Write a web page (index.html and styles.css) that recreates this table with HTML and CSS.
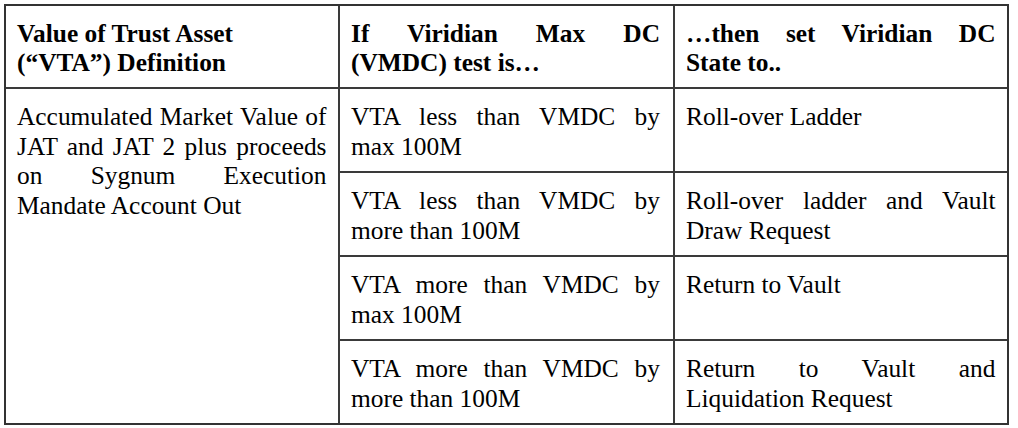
FILE: index.html
```html
<!DOCTYPE html>
<html>
<head>
<meta charset="utf-8">
<link rel="stylesheet" href="styles.css">
</head>
<body>
<div class="vt">
  <div class="cell head c1"><span class="ln">Value of Trust Asset</span><span class="ln">(“VTA”) Definition</span></div>
  <div class="cell head c2"><span class="ln j">If Viridian Max DC</span><span class="ln">(VMDC) test is…</span></div>
  <div class="cell head c3"><span class="ln j">…then set Viridian DC</span><span class="ln">State to..</span></div>

  <div class="cell body c1 span"><span class="ln j">Accumulated Market Value of</span><span class="ln j">JAT and JAT 2 plus proceeds</span><span class="ln j">on Sygnum Execution</span><span class="ln">Mandate Account Out</span></div>

  <div class="cell body c2"><span class="ln j">VTA less than VMDC by</span><span class="ln">max 100M</span></div>
  <div class="cell body c3"><span class="ln">Roll-over Ladder</span></div>

  <div class="cell body c2"><span class="ln j">VTA less than VMDC by</span><span class="ln">more than 100M</span></div>
  <div class="cell body c3"><span class="ln j">Roll-over ladder and Vault</span><span class="ln">Draw Request</span></div>

  <div class="cell body c2"><span class="ln j">VTA more than VMDC by</span><span class="ln">max 100M</span></div>
  <div class="cell body c3"><span class="ln">Return to Vault</span></div>

  <div class="cell body c2 last"><span class="ln j">VTA more than VMDC by</span><span class="ln">more than 100M</span></div>
  <div class="cell body c3 last"><span class="ln j">Return to Vault and</span><span class="ln">Liquidation Request</span></div>
</div>
</body>
</html>
```

FILE: styles.css
```css
html, body {
  margin: 0;
  padding: 0;
  background: #ffffff;
}
body {
  padding: 4px 0 0 4px;
}
.vt {
  display: grid;
  grid-template-columns: 334px 335px 332px;
  width: max-content;
  border: 2px solid #333;
  font-family: "Liberation Serif", "Times New Roman", serif;
  font-size: 25.4px;
  line-height: 29.5px;
  color: #000;
}
.cell {
  box-sizing: border-box;
  border-bottom: 2px solid #3a3a3a;
}
.ln {
  display: block;
  white-space: nowrap;
  text-align: left;
}
.ln.j {
  text-align: justify;
  text-align-last: justify;
}
.c1 {
  grid-column: 1;
  border-right: 2px solid #3a3a3a;
  padding-left: 11px;
  padding-right: 11.5px;
}
.c2 {
  grid-column: 2;
  border-right: 2px solid #3a3a3a;
  padding-left: 11px;
  padding-right: 13px;
}
.c3 {
  grid-column: 3;
  padding-left: 11px;
  padding-right: 11.5px;
}
.head {
  font-weight: bold;
  padding-top: 12.5px;
  padding-bottom: 9.5px;
}
.body {
  padding-top: 13px;
  padding-bottom: 10px;
}
.span {
  grid-row: 2 / span 4;
  border-bottom: none;
}
.last {
  border-bottom: none;
}
```
